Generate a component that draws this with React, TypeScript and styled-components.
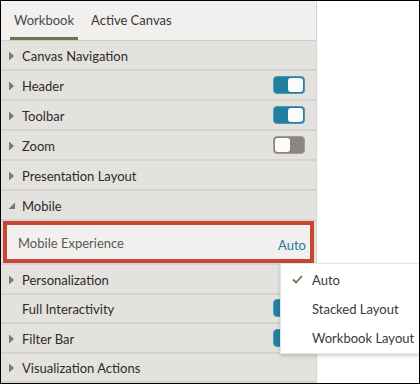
import React from "react";
import styled, { createGlobalStyle } from "styled-components";

const Global = createGlobalStyle`
  html, body { margin: 0; padding: 0; background: #fff; }
  body { font-family: "Lato", "Noto Sans", sans-serif; }
  * { box-sizing: border-box; }
`;

const Frame = styled.div`
  position: relative;
  width: 420px;
  height: 384px;
  border: 1px solid #000;
  display: flex;
  overflow: hidden;
  background: #fff;
`;

const Panel = styled.div`
  width: 316px;
  display: flex;
  flex-direction: column;
  background: #e3e2de;
  border-right: 1px solid #d6d5d1;
`;

const Tabs = styled.div`
  height: 40px;
  display: flex;
  align-items: stretch;
  gap: 9px;
  padding-left: 9px;
  background: #f1f0ee;
  border-bottom: 1px solid #cfcecb;
`;

const Tab = styled.div<{ $active?: boolean }>`
  display: flex;
  align-items: center;
  padding: 2px 4px 0 4px;
  font-size: 13px;
  color: ${(p) => (p.$active ? "#4b4845" : "#3a3633")};
  border-bottom: 3px solid ${(p) => (p.$active ? "#627a4d" : "transparent")};
`;

const Row = styled.div<{ $h?: number }>`
  height: ${(p) => p.$h ?? 30}px;
  display: flex;
  align-items: center;
  padding: 2px 11px 0 7px;
  border-bottom: 2px solid #d3d2ce;
  font-size: 13px;
  color: #2f2b29;
`;

const Caret = styled.span`
  width: 14px;
  display: inline-flex;
  align-items: center;
  flex: none;
`;

const Label = styled.span`
  flex: 1;
  white-space: nowrap;
`;

const Toggle = styled.span<{ $on?: boolean }>`
  width: 32px;
  height: 18px;
  margin-top: -2px;
  border-radius: 4px;
  background: ${(p) => (p.$on ? "#237fa0" : "#8b8681")};
  border: 1px solid ${(p) => (p.$on ? "#4f97b3" : "#9f9a95")};
  display: flex;
  justify-content: ${(p) => (p.$on ? "flex-end" : "flex-start")};
  align-items: center;
  padding: 1px;
`;

const Knob = styled.span`
  width: 15px;
  height: 14px;
  border-radius: 3px;
  background: #fdfcfb;
`;

const Section = styled.div`
  padding: 0 2px 0 2px;
  border-bottom: 2px solid #d3d2ce;
  background: #e3e2de;
`;

const Highlight = styled.div`
  height: 42px;
  border: 4px solid #c74634;
  background: #f1f0ee;
  display: flex;
  align-items: center;
  justify-content: space-between;
  padding: 2px 4px 0 11px;
  font-size: 13px;
`;

const SubLabel = styled.span`
  color: #5c5854;
`;

const Value = styled.span`
  color: #1f7ca0;
  position: relative;
  top: 2px;
`;

const Menu = styled.div`
  position: absolute;
  left: 279px;
  top: 262px;
  width: 140px;
  height: 91px;
  background: #fff;
  border: 1px solid #e6e5e2;
  border-right: none;
  box-shadow: 0 2px 4px rgba(0, 0, 0, 0.18);
  padding-top: 1px;
  display: flex;
  flex-direction: column;
`;

const MenuItem = styled.div`
  height: 30px;
  display: flex;
  align-items: center;
  font-size: 13px;
  color: #3c3835;
`;

const Check = styled.span`
  width: 31px;
  padding-left: 11px;
  display: inline-flex;
  align-items: center;
`;

const Right = () => (
  <svg width="7" height="10" viewBox="0 0 7 10">
    <path d="M1 0.5 L6 5 L1 9.5 Z" fill="#7b7874" />
  </svg>
);

const Down = () => (
  <svg width="8" height="8" viewBox="0 0 8 8">
    <path d="M7 0.5 L7 7 L0.5 7 Z" fill="#7b7874" />
  </svg>
);

type RowData = { label: string; caret: boolean; toggle?: boolean };

const rowsTop: RowData[] = [
  { label: "Canvas Navigation", caret: true },
  { label: "Header", caret: true, toggle: true },
  { label: "Toolbar", caret: true, toggle: true },
  { label: "Zoom", caret: true, toggle: false },
  { label: "Presentation Layout", caret: true },
];

const rowsBottom: RowData[] = [
  { label: "Personalization", caret: true },
  { label: "Full Interactivity", caret: false, toggle: true },
  { label: "Filter Bar", caret: true, toggle: true },
  { label: "Visualization Actions", caret: true },
];

const renderRow = (r: RowData, h?: number) => (
  <Row key={r.label} $h={h}>
    <Caret>{r.caret ? <Right /> : null}</Caret>
    <Label>{r.label}</Label>
    {r.toggle !== undefined && (
      <Toggle $on={r.toggle}>
        <Knob />
      </Toggle>
    )}
  </Row>
);

export default function App() {
  return (
    <>
      <Global />
      <Frame>
        <Panel>
          <Tabs>
            <Tab $active>Workbook</Tab>
            <Tab>Active Canvas</Tab>
          </Tabs>
          {rowsTop.map((r) => renderRow(r))}
          <Row>
            <Caret>
              <Down />
            </Caret>
            <Label>Mobile</Label>
          </Row>
          <Section>
            <Highlight>
              <SubLabel>Mobile Experience</SubLabel>
              <Value>Auto</Value>
            </Highlight>
          </Section>
          {rowsBottom.map((r) => renderRow(r, 29.5))}
        </Panel>
        <Menu>
          <MenuItem>
            <Check>
              <svg width="11" height="9" viewBox="0 0 11 9">
                <path d="M1 4.5 L4 7.5 L10 1" fill="none" stroke="#5f7b4f" strokeWidth="1.8" />
              </svg>
            </Check>
            Auto
          </MenuItem>
          <MenuItem>
            <Check />
            Stacked Layout
          </MenuItem>
          <MenuItem>
            <Check />
            Workbook Layout
          </MenuItem>
        </Menu>
      </Frame>
    </>
  );
}
